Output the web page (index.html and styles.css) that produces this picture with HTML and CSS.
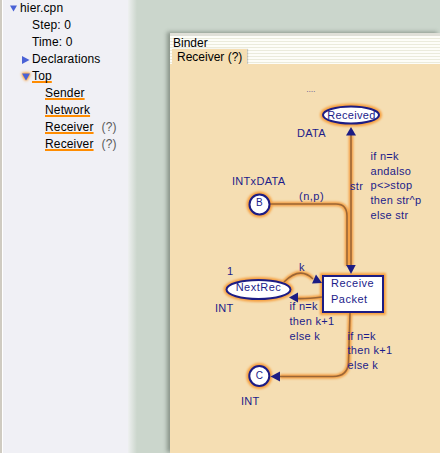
FILE: index.html
```html
<!DOCTYPE html>
<html>
<head>
<meta charset="utf-8">
<link rel="stylesheet" href="styles.css">
</head>
<body>
<div class="app">
  <nav class="tree">
    <div class="row lv0"><span class="ico"><svg width="7" height="7" viewBox="0 0 7 7"><path d="M0 0.5H7L3.5 6.5Z" fill="#4a62d6"/></svg></span><span>hier.cpn</span></div>
    <div class="row lv1">Step: 0</div>
    <div class="row lv1">Time: 0</div>
    <div class="row lv1i"><span class="ico"><svg width="8" height="8" viewBox="0 0 8 8"><path d="M0 0L7.5 4L0 8Z" fill="#4a62d6"/></svg></span><span>Declarations</span></div>
    <div class="row lv1i"><span class="ico glowico"><svg width="8" height="8" viewBox="0 0 8 8"><path d="M0 0.5H8L4 7.5Z" fill="#4a62d6"/></svg></span><span class="lnk">Top</span></div>
    <div class="row lv2"><span class="lnk">Sender</span></div>
    <div class="row lv2"><span class="lnk">Network</span></div>
    <div class="row lv2"><span class="lnk">Receiver</span><span class="q">(?)</span></div>
    <div class="row lv2"><span class="lnk">Receiver</span><span class="q">(?)</span></div>
  </nav>
  <main class="desk">
    <section class="binder">
      <div class="bar"></div>
      <div class="head">
        <div class="btitle">Binder</div>
        <div class="tabs"><div class="tab">Receiver (?)</div></div>
      </div>
      <div class="page">
        <svg class="net" width="270" height="389" viewBox="170 64 270 389">
          <defs>
            <filter id="bl" filterUnits="userSpaceOnUse" x="170" y="64" width="270" height="389">
              <feGaussianBlur stdDeviation="1.3"/>
            </filter>
          </defs>
          <g filter="url(#bl)" class="glow">
            <path d="M351 135L351 266"/>
            <path d="M270 204L336 204Q347 204 347 216L347 266"/>
            <path d="M284 282Q300 266 313 279"/>
            <path d="M322 297Q306 299 296 298.5"/>
            <path d="M350 313L348.5 362Q348 376.5 333 376.5L280 376.5"/>
            <ellipse cx="351" cy="115" rx="28" ry="8.5" class="gn"/>
            <ellipse cx="258.5" cy="289.5" rx="32" ry="9.5" class="gn"/>
            <circle cx="259.5" cy="204.5" r="10" class="gn"/>
            <circle cx="259.3" cy="376" r="10" class="gn"/>
            <rect x="323" y="276" width="60" height="36" class="gn"/>
          </g>
          <g class="arc">
            <path d="M351 135L351 266"/>
            <path d="M270 204L336 204Q347 204 347 216L347 266"/>
            <path d="M284 282Q300 266 313 279"/>
            <path d="M322 297Q306 299 296 298.5"/>
            <path d="M350 313L348.5 362Q348 376.5 333 376.5L280 376.5"/>
          </g>
          <g class="head-ar">
            <polygon points="351,127 346,135.5 356,135.5"/>
            <polygon points="351,274 346.3,265 355.7,265"/>
            <polygon points="322,283 312,283.5 316,274.5"/>
            <polygon points="289,297.5 298,292.5 298,302.5"/>
            <polygon points="270.5,376.5 280,371.5 280,381.5"/>
          </g>
          <g class="node">
            <ellipse cx="351" cy="115" rx="28" ry="8.5"/>
            <ellipse cx="258.5" cy="289.5" rx="32" ry="9.5"/>
            <circle cx="259.5" cy="204.5" r="10"/>
            <circle cx="259.3" cy="376" r="10"/>
            <rect x="323" y="276" width="60" height="36"/>
          </g>
          <g class="lbl">
            <text x="306.5" y="92" class="dots">....</text>
            <text x="297" y="137">DATA</text>
            <text x="351.5" y="118.5" class="mid ls3">Received</text>
            <text x="350" y="190">str</text>
            <text x="370.5" y="160">if n=k</text>
            <text x="370.5" y="174.5">andalso</text>
            <text x="370.5" y="189">p&lt;&gt;stop</text>
            <text x="370.5" y="204">then str^p</text>
            <text x="370.5" y="219">else str</text>
            <text x="232" y="185">INTxDATA</text>
            <text x="259.5" y="205.5" class="mid sm">B</text>
            <text x="299" y="199.5" class="ls4">(n,p)</text>
            <text x="227" y="275">1</text>
            <text x="299" y="270.5">k</text>
            <text x="258.5" y="291" class="mid ls5">NextRec</text>
            <text x="215" y="311.5">INT</text>
            <text x="331" y="287" class="ls4">Receive</text>
            <text x="331" y="302.5" class="ls4">Packet</text>
            <text x="289.5" y="310">if n=k</text>
            <text x="289.5" y="325">then k+1</text>
            <text x="289.5" y="340">else k</text>
            <text x="347.5" y="339.5">if n=k</text>
            <text x="347.5" y="354">then k+1</text>
            <text x="347.5" y="368.5">else k</text>
            <text x="259.5" y="378.5" class="mid sm">C</text>
            <text x="241" y="405">INT</text>
          </g>
        </svg>
      </div>
    </section>
  </main>
</div>
</body>
</html>
```
FILE: styles.css
```css
html, body {
  margin: 0;
  padding: 0;
}
body {
  width: 440px;
  height: 453px;
  overflow: hidden;
  font-family: "Liberation Sans", Arial, sans-serif;
  font-size: 12px;
  color: #000;
}
.app {
  display: flex;
  height: 453px;
}
.tree {
  width: 128px;
  flex: none;
  box-sizing: border-box;
  border-left: 2px solid #cfcbc1;
  box-shadow: inset 1px 0 #ffffff;
  background: #f0f0f5;
}
.row {
  height: 17px;
  line-height: 17px;
  display: flex;
  align-items: center;
  white-space: nowrap;
  letter-spacing: 0.15px;
}
.lv0 { padding-left: 8px; }
.lv1 { padding-left: 30px; }
.lv1i { padding-left: 20px; }
.lv2 { padding-left: 43px; }
.lv0 .ico { width: 10px; }
.lv1i .ico { width: 10px; }
.ico {
  display: flex;
  align-items: center;
  height: 17px;
}
.glowico svg {
  filter: drop-shadow(0 0 1.5px #ff9a1a) drop-shadow(0 0 1px #ffa030);
}
.lnk {
  text-decoration: underline #ff8c00;
  text-decoration-thickness: 2px;
  text-underline-offset: 1px;
  text-decoration-skip-ink: none;
}
.q {
  color: #5a5a5a;
  margin-left: 8px;
}
.desk {
  flex: 1;
  display: flex;
  box-sizing: border-box;
  padding: 33px 0 0 42px;
  background: linear-gradient(to right, #eef0f0 0, #cbd6cc 9px);
}
.binder {
  flex: 1;
  display: flex;
  flex-direction: column;
  background: #f5deb3;
  box-shadow: -3px -1px 4px rgba(60, 70, 60, 0.45);
}
.bar {
  height: 3px;
  background: #e0e0d8;
}
.head {
  background: repeating-linear-gradient(to bottom, #fdfdf8 0, #fdfdf8 2px, #ebebdc 2px, #ebebdc 3px);
}
.btitle {
  height: 13px;
  line-height: 15px;
  padding-left: 3px;
}
.tabs {
  height: 15px;
  display: flex;
  padding-left: 2px;
}
.tab {
  width: 75px;
  box-sizing: border-box;
  padding: 1px 0 0 5px;
  line-height: 15px;
  background: #f5deb3;
  box-shadow: 1px 0 1px rgba(0, 0, 0, 0.18);
}
.page {
  flex: 1;
  background: #f5deb3;
  overflow: hidden;
}
.net {
  display: block;
}
.glow path {
  fill: none;
  stroke: #f4a045;
  stroke-width: 4.5;
}
.glow .gn {
  fill: none;
  stroke: #f6a040;
  stroke-width: 6;
}
.arc path {
  fill: none;
  stroke: #9b6636;
  stroke-width: 1.6;
}
.head-ar polygon {
  fill: #1c1c84;
}
.node ellipse, .node circle, .node rect {
  fill: #ffffff;
  stroke: #1c1c84;
  stroke-width: 2;
}
.lbl text {
  font-family: "Liberation Sans", Arial, sans-serif;
  font-size: 11px;
  letter-spacing: 0.3px;
  fill: #1c1c8a;
}
.lbl .mid { text-anchor: middle; }
.lbl .sm { font-size: 10px; }
.lbl .dots { font-size: 7px; }
.lbl .ls3 { letter-spacing: 0.3px; }
.lbl .ls4 { letter-spacing: 0.5px; }
.lbl .ls5 { letter-spacing: 0.5px; }
```
